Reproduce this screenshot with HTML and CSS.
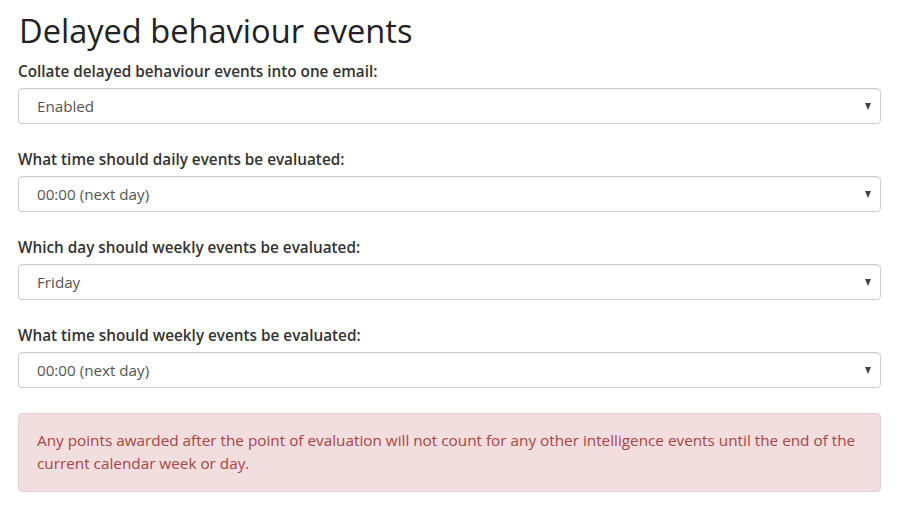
FILE: index.html
```html
<!DOCTYPE html>
<html>
<head>
<meta charset="utf-8">
<link rel="stylesheet" href="styles.css">
</head>
<body>
<div class="page">
  <h2 class="title">Delayed behaviour events</h2>
  <div class="group">
    <label class="label">Collate delayed behaviour events into one email:</label>
    <div class="select"><span class="value">Enabled</span><span class="caret"></span></div>
  </div>
  <div class="group">
    <label class="label">What time should daily events be evaluated:</label>
    <div class="select"><span class="value">00:00 (next day)</span><span class="caret"></span></div>
  </div>
  <div class="group">
    <label class="label">Which day should weekly events be evaluated:</label>
    <div class="select"><span class="value">Friday</span><span class="caret"></span></div>
  </div>
  <div class="group">
    <label class="label">What time should weekly events be evaluated:</label>
    <div class="select"><span class="value">00:00 (next day)</span><span class="caret"></span></div>
  </div>
  <div class="alert">Any points awarded after the point of evaluation will not count for any other intelligence events until the end of the current calendar week or day.</div>
</div>
</body>
</html>
```
FILE: styles.css
```css
html, body {
  margin: 0;
  padding: 0;
  background: #fff;
}
body {
  font-family: "Open Sans", "DejaVu Sans", sans-serif;
  font-size: 15.2px;
  color: #333;
}
.page {
  padding: 14px 21px 0 18px;
}
.title {
  margin: 0 0 13px 1px;
  font-size: 32.6px;
  font-weight: 400;
  line-height: 34px;
  color: #222;
}
.group {
  margin-bottom: 25px;
}
.label {
  display: block;
  font-weight: 600;
  font-size: 15.3px;
  line-height: 20px;
  margin-bottom: 7px;
  color: #333;
}
.select {
  height: 36px;
  box-sizing: border-box;
  border: 1px solid #ccc;
  border-radius: 4px;
  display: flex;
  align-items: center;
  padding: 0 8px 0 18px;
  color: #555;
  box-shadow: inset 0 1px 1px rgba(0,0,0,0.06);
}
.value {
  flex: 1;
}
.caret {
  width: 0;
  height: 0;
  border-left: 3.5px solid transparent;
  border-right: 3.5px solid transparent;
  border-top: 7px solid #444;
  margin-right: 1px;
}
.alert {
  background: #f2dede;
  border: 1px solid #ebccd1;
  border-radius: 4px;
  color: #a94442;
  padding: 15px 18px 16px 18px;
  line-height: 23px;
  font-size: 15.3px;
}
```
